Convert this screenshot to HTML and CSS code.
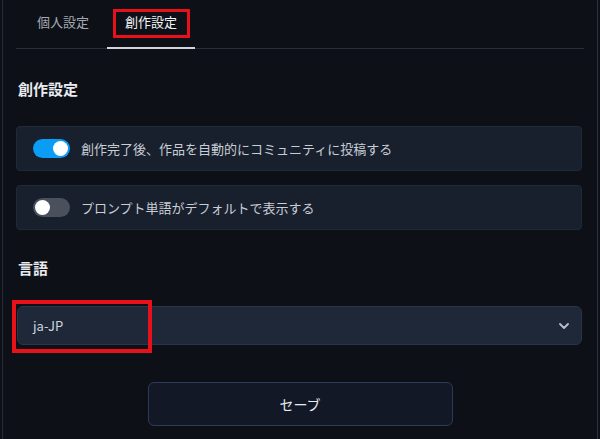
FILE: index.html
```html
<!DOCTYPE html>
<html lang="ja">
<head>
<meta charset="utf-8">
<link rel="stylesheet" href="styles.css">
</head>
<body>
<div class="frame">
  <nav class="tabs">
    <div class="tab">個人設定</div>
    <div class="tab active">創作設定<span class="mark mark-tab"></span></div>
  </nav>
  <h2 class="heading">創作設定</h2>
  <div class="card">
    <span class="switch on"><span class="knob"></span></span>
    <span class="label">創作完了後、作品を自動的にコミュニティに投稿する</span>
  </div>
  <div class="card">
    <span class="switch"><span class="knob"></span></span>
    <span class="label">プロンプト単語がデフォルトで表示する</span>
  </div>
  <h2 class="heading lang">言語</h2>
  <div class="select">
    <span class="value">ja-JP</span>
    <svg class="chev" width="12" height="8" viewBox="0 0 12 8"><path d="M2 2l4 4 4-4" fill="none" stroke="#b9c0cc" stroke-width="1.8" stroke-linecap="round" stroke-linejoin="round"/></svg>
    <span class="mark mark-select"></span>
  </div>
  <div class="actions">
    <button class="save">セーブ</button>
  </div>
</div>
</body>
</html>
```
FILE: styles.css
```css
html, body {
  margin: 0;
  padding: 0;
  background: #0e1017;
  font-family: "Noto Sans CJK JP", "Noto Sans", sans-serif;
  color: #d4d8df;
}
.frame {
  margin-left: 2px;
  width: 596px;
  height: 439px;
  border-left: 1px solid #262b36;
  border-right: 1px solid #2c313c;
  box-sizing: border-box;
  padding: 0 13px 0 13px;
}
.tabs {
  display: flex;
  border-bottom: 1px solid #262e3b;
  height: 49px;
  box-sizing: border-box;
}
.tab {
  position: relative;
  font-size: 13px;
  line-height: 20px;
  padding: 12px 18px 0;
  margin-left: 3px;
  color: #a3a9b3;
  height: 48px;
  box-sizing: border-box;
}
.tab.active {
  color: #f2f4f7;
  margin-left: 0;
  border-bottom: 2px solid #d2d6dc;
  margin-bottom: -1px;
  height: 49px;
}
.mark {
  position: absolute;
  border: 3px solid #e8111a;
  box-sizing: border-box;
}
.mark-tab {
  left: 6px;
  top: 9px;
  width: 77px;
  height: 29px;
}
.heading {
  margin: 30px 0 0 2px;
  font-size: 15px;
  font-weight: 700;
  line-height: 20px;
  color: #e8ebef;
}
.card {
  display: flex;
  align-items: center;
  height: 45px;
  box-sizing: border-box;
  background: #18202e;
  border: 1px solid #212a38;
  border-radius: 4px;
  padding-left: 16px;
  margin-top: 27px;
  margin-right: 2px;
}
.card + .card {
  margin-top: 14px;
}
.switch {
  position: relative;
  width: 37px;
  height: 19px;
  border-radius: 10px;
  background: #4a505c;
  flex: none;
}
.switch.on {
  background: #0b9cf5;
}
.knob {
  position: absolute;
  top: 2px;
  left: 2px;
  width: 15px;
  height: 15px;
  border-radius: 50%;
  background: #fff;
}
.switch.on .knob {
  left: 20px;
}
.label {
  margin-left: 11px;
  font-size: 13px;
  color: #c9cdd4;
}
.heading.lang {
  margin-top: 28px;
}
.select {
  position: relative;
  display: flex;
  align-items: center;
  justify-content: space-between;
  margin-top: 28px;
  margin-left: 1px;
  margin-right: 2px;
  height: 39px;
  box-sizing: border-box;
  background: #1e2839;
  border: 1px solid #2a3547;
  border-radius: 6px;
  padding: 0 11px 0 15px;
  font-size: 13px;
  color: #cfd4dc;
}
.mark-select {
  left: -6px;
  top: -7px;
  width: 140px;
  height: 53px;
  border-width: 4px;
}
.actions {
  display: flex;
  justify-content: center;
  margin-top: 37px;
}
.save {
  width: 305px;
  height: 44px;
  background: #131826;
  border: 1px solid #2c3b55;
  border-radius: 6px;
  color: #e8ebef;
  font-family: inherit;
  font-size: 14px;
}
```
